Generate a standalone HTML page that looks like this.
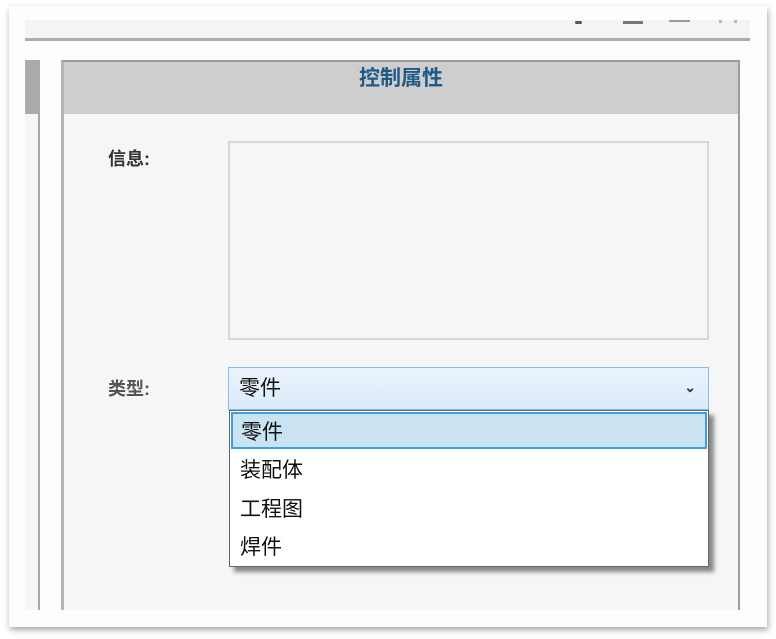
<!DOCTYPE html>
<html><head><meta charset="utf-8"><style>
*{margin:0;padding:0;box-sizing:border-box}
body{width:776px;height:639px;background:#fff;position:relative;overflow:hidden;font-family:"Liberation Sans","Microsoft YaHei","Noto Sans CJK SC",sans-serif}
.a{position:absolute}
</style></head><body>
<div class="a" style="left:9px;top:6px;width:758px;height:621px;background:#fdfdfd;box-shadow:1px 3px 6px rgba(0,0,0,.35)"></div>
<div class="a" style="left:25px;top:20px;width:725px;height:19px;background:#f4f4f4"></div>
<div class="a" style="left:25px;top:38px;width:725px;height:3px;background:#b2a9a9"></div>
<div class="a" style="left:575px;top:21px;width:7px;height:3px;background:#556;border-radius:2px"></div>
<div class="a" style="left:623px;top:21px;width:20px;height:3px;background:#777"></div>
<div class="a" style="left:669px;top:20px;width:21px;height:2px;background:#999"></div>
<div class="a" style="left:719px;top:20px;width:3px;height:3px;background:#bbb"></div>
<div class="a" style="left:734px;top:20px;width:3px;height:3px;background:#bbb"></div>
<div class="a" style="left:25px;top:60px;width:14px;height:550px;background:#f6f6f6"></div>
<div class="a" style="left:25px;top:60px;width:14px;height:54px;background:#aaa"></div>
<div class="a" style="left:38px;top:60px;width:2px;height:550px;background:#a8a8a8"></div>
<div class="a" style="left:61px;top:60px;width:679px;height:550px;background:#f6f6f6;border-left:3px solid #b4b4b4;border-right:2px solid #9c9c9c;border-top:2px solid #999"></div>
<div class="a" style="left:64px;top:62px;width:674px;height:52px;background:#cecece;text-align:center;color:#1e5a85;font-weight:bold;font-size:21px;line-height:34px">控制属性</div>
<div class="a" style="left:108px;top:145px;font-size:18px;color:#333;font-weight:bold">信息:</div>
<div class="a" style="left:108px;top:375px;font-size:18px;color:#555;font-weight:bold">类型:</div>
<div class="a" style="left:228px;top:141px;width:481px;height:199px;border:2px solid #d4d6e2;background:#f6f6f6"></div>
<div class="a" style="left:228px;top:367px;width:481px;height:43px;border:1px solid #86bcec;background:linear-gradient(#eaf3fc,#dcebfa);font-size:21px;line-height:41px;padding-left:10px;color:#111">零件<span class="a" style="right:12px;top:0;font-size:14px;font-weight:bold;color:#333;line-height:38px">&#8964;</span></div>
<div class="a" style="left:229px;top:410px;width:480px;height:157px;border:1px solid #666;background:#fff;box-shadow:5px 5px 4px rgba(0,0,0,.45);font-size:21px;color:#111">
 <div style="margin:1px;height:37px;background:#c9e3f3;border:2px solid #3aa0de;padding-left:8px;line-height:37px">零件</div>
 <div style="height:39px;line-height:42px;padding-left:10px">装配体</div>
 <div style="height:39px;line-height:42px;padding-left:10px">工程图</div>
 <div style="height:39px;line-height:40px;padding-left:10px">焊件</div>
</div>
</body></html>
